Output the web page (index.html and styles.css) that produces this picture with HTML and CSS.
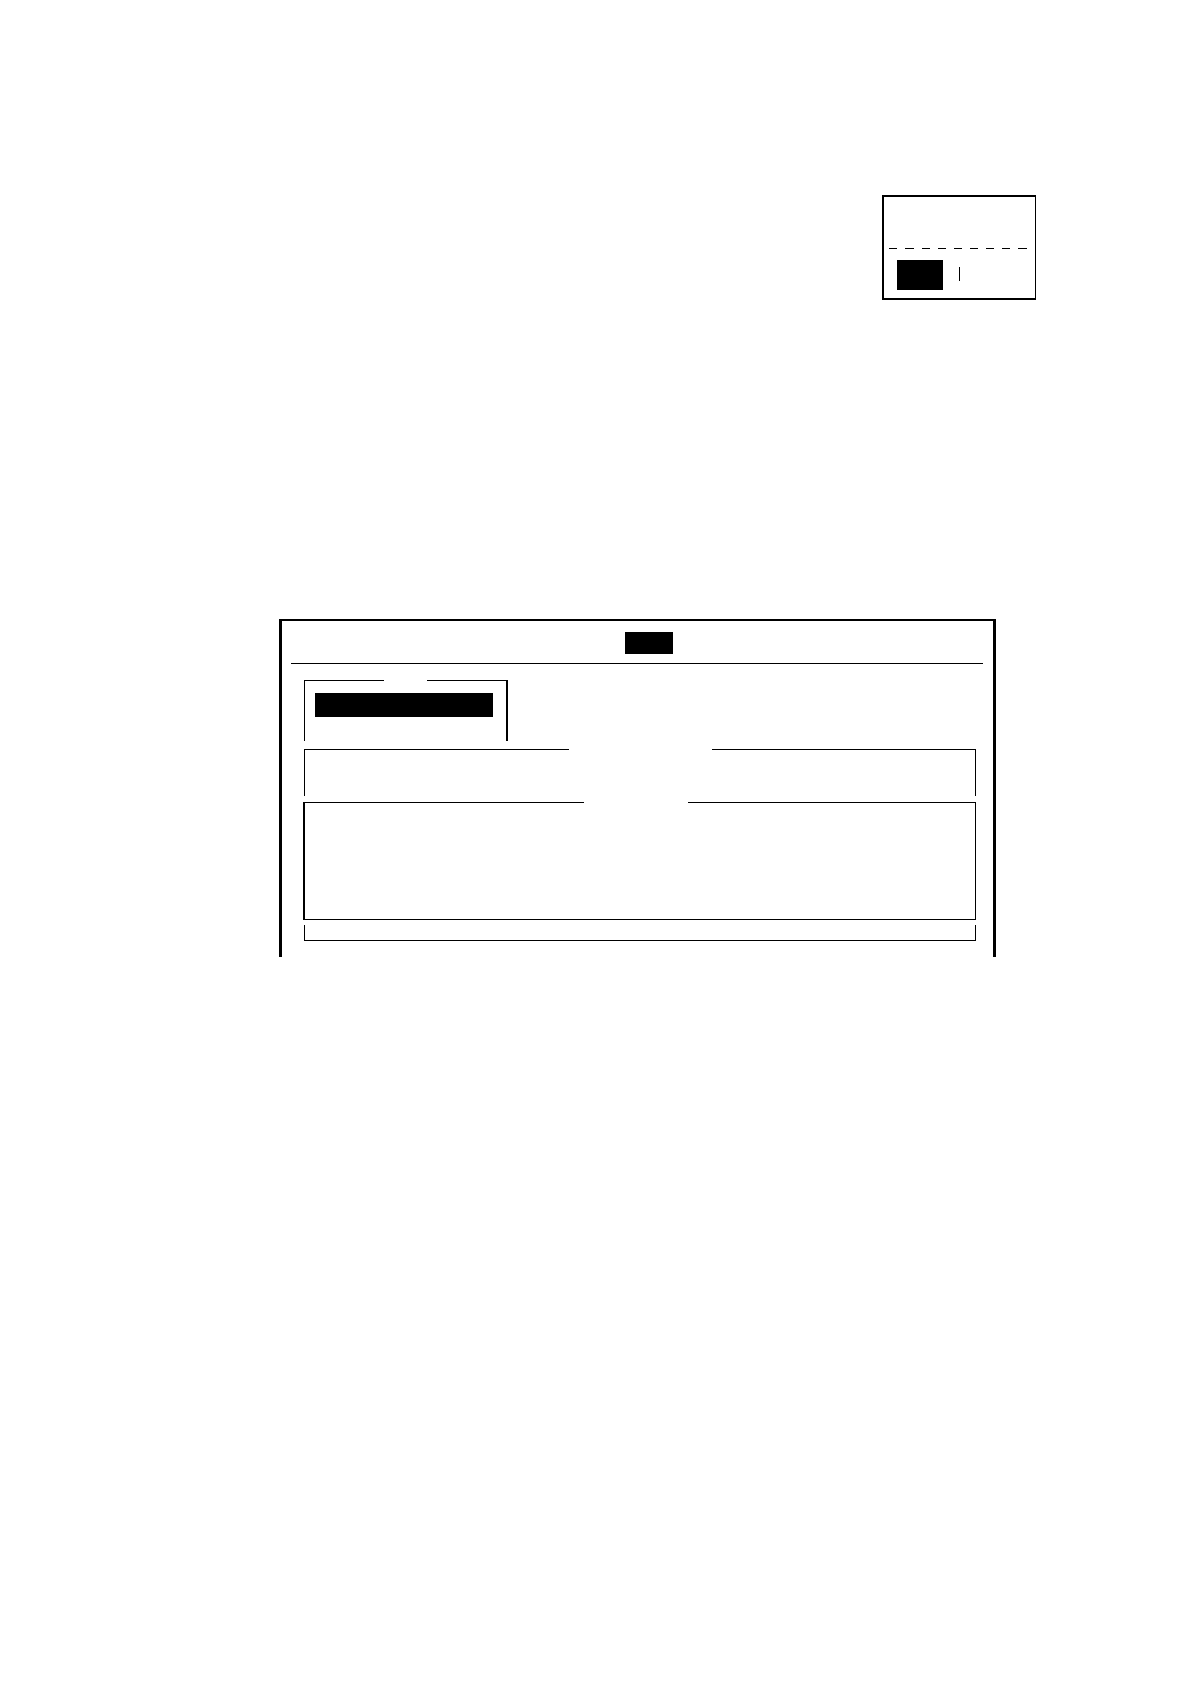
FILE: index.html
```
<!DOCTYPE html>
<html lang="en">
<head>
<meta charset="utf-8">
<title>Screen diagram</title>
<link rel="stylesheet" href="styles.css">
</head>
<body>
<main class="page">
  <section class="prompt">
    <svg class="prompt-rule" width="138" height="1" viewBox="0 0 138 1" shape-rendering="crispEdges" aria-hidden="true">
      <path d="M0 0h8v1h-8zM16 0h9v1h-9zM33 0h8v1h-8zM49 0h8v1h-8zM65 0h8v1h-8zM81 0h8v1h-8zM97 0h8v1h-8zM113 0h8v1h-8zM129 0h9v1h-9z"/>
    </svg>
    <div class="prompt-row">
      <div class="prompt-key"></div>
      <div class="caret"></div>
    </div>
  </section>

  <section class="screen">
    <header class="menu-bar">
      <div class="menu-selected"></div>
    </header>
    <div class="groups">
      <div class="group menu">
        <div class="cap"><i class="line"></i><i class="gap-small"></i><i class="line"></i></div>
        <div class="menu-highlight"></div>
      </div>
      <div class="group summary">
        <div class="cap"><i class="line"></i><i class="gap-large"></i><i class="line"></i></div>
      </div>
      <div class="group details">
        <div class="cap"><i class="line details-start"></i><i class="gap-medium"></i><i class="line details-end"></i></div>
      </div>
      <div class="group footer"></div>
    </div>
  </section>
</main>
</body>
</html>
```
FILE: styles.css
```
* {
  box-sizing: border-box;
}

body {
  margin: 0;
  background: #fff;
  color: #000;
}

.page {
  display: flex;
  flex-direction: column;
  min-height: 100vh;
  padding: 195px 154px 64px 279px;
}

/* Small prompt window */
.prompt {
  align-self: flex-end;
  width: 154px;
  padding: 51px 8px 8px 5px;
  border: 2px solid #000;
  border-right-width: 1px;
}

.prompt-rule {
  display: block;
}

.prompt-row {
  display: flex;
  align-items: flex-start;
  gap: 16px;
  padding: 11px 0 0 8px;
}

.prompt-key {
  width: 46px;
  height: 30px;
  background: #000;
}

.caret {
  width: 1px;
  height: 14px;
  margin-top: 7px;
  background: #000;
}

/* Main screen, open at the bottom */
.screen {
  margin: 319px 40px 0 0;
  padding: 0 10px 16px 9px;
  border: solid #000;
  border-width: 2px 3px 0;
}

.menu-bar {
  display: flex;
  justify-content: center;
  height: 43px;
  padding: 11px 0 0 24px;
  border-bottom: 1px solid #000;
}

.menu-selected {
  width: 48px;
  height: 22px;
  background: #000;
}

.groups {
  padding: 16px 7px 0 13px;
}

.group {
  border: solid #000;
  border-width: 0 1px;
}

.cap {
  display: flex;
}

.line {
  flex: 1;
  height: 1px;
  background: #000;
}

.gap-small {
  width: 43px;
}

.gap-medium {
  width: 104px;
}

.gap-large {
  width: 143px;
}

.menu {
  width: 204px;
  height: 61px;
  margin-bottom: 8px;
  border-right-width: 2px;
}

.menu-highlight {
  height: 24px;
  margin: 12px 13px 0 10px;
  background: #000;
}

.summary {
  height: 47px;
  margin-bottom: 6px;
}

.details {
  height: 118px;
  margin: 0 0 5px -1px;
  border-left-width: 2px;
  border-bottom-width: 1px;
}

.details-start {
  flex-grow: 35;
}

.details-end {
  flex-grow: 36;
}

.footer {
  height: 16px;
  border-bottom-width: 1px;
}
```
